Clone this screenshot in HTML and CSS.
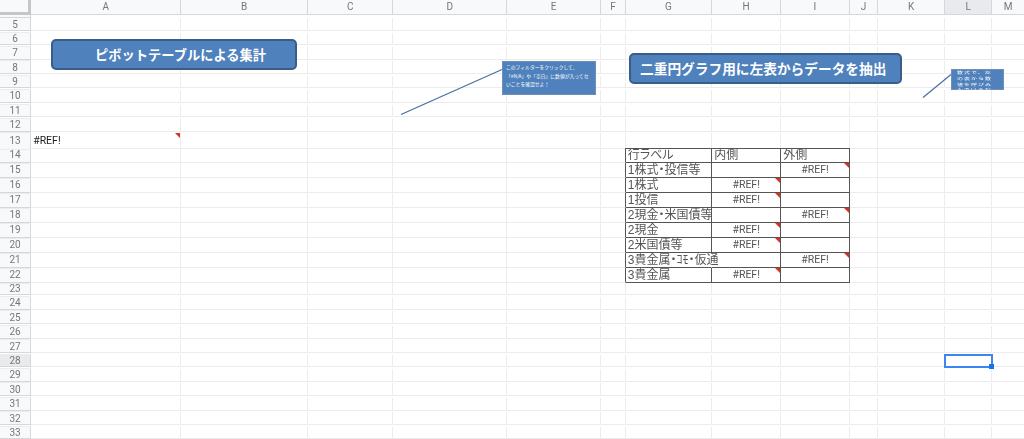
FILE: index.html
```html
<!DOCTYPE html>
<html lang="ja">
<head>
<meta charset="utf-8">
<title>ピボットテーブルによる集計</title>
<link rel="stylesheet" href="styles.css">
</head>
<body>
<main class="sheet">
  <div class="cols">
    <div class="corner"></div><b>A</b><b>B</b><b>C</b><b>D</b><b>E</b><b>F</b><b>G</b><b>H</b><b>I</b><b>J</b><b>K</b><b class="on">L</b><b>M</b><b></b>
  </div>
  <div class="row"><b>5</b><i></i><i></i><i></i><i></i><i></i><i></i><i></i><i></i><i></i><i></i><i></i><i></i><i></i><i></i></div>
  <div class="row"><b>6</b><i></i><i></i><i></i><i></i><i></i><i></i><i></i><i></i><i></i><i></i><i></i><i></i><i></i><i></i></div>
  <div class="row"><b>7</b><i></i><i></i><i></i><i></i><i></i><i></i><i></i><i></i><i></i><i></i><i></i><i></i><i></i><i></i></div>
  <div class="row"><b>8</b><i></i><i></i><i></i><i></i><i></i><i></i><i></i><i></i><i></i><i></i><i></i><i></i><i></i><i></i></div>
  <div class="row"><b>9</b><i></i><i></i><i></i><i></i><i></i><i></i><i></i><i></i><i></i><i></i><i></i><i></i><i></i><i></i></div>
  <div class="row"><b>10</b><i></i><i></i><i></i><i></i><i></i><i></i><i></i><i></i><i></i><i></i><i></i><i></i><i></i><i></i></div>
  <div class="row"><b>11</b><i></i><i></i><i></i><i></i><i></i><i></i><i></i><i></i><i></i><i></i><i></i><i></i><i></i><i></i></div>
  <div class="row"><b>12</b><i></i><i></i><i></i><i></i><i></i><i></i><i></i><i></i><i></i><i></i><i></i><i></i><i></i><i></i></div>
  <div class="row"><b>13</b><i class="ref note">#REF!</i><i></i><i></i><i></i><i></i><i></i><i class="tb"></i><i class="tb"></i><i class="tb"></i><i></i><i></i><i></i><i></i><i></i></div>
  <div class="row tr"><b>14</b><i></i><i></i><i></i><i></i><i></i><i class="tl"></i><i class="t">行ラベル</i><i class="t">内側</i><i class="t">外側</i><i></i><i></i><i></i><i></i><i></i></div>
  <div class="row tr"><b>15</b><i></i><i></i><i></i><i></i><i></i><i class="tl"></i><i class="t">1株式・投信等</i><i class="t"></i><i class="t v note">#REF!</i><i></i><i></i><i></i><i></i><i></i></div>
  <div class="row tr"><b>16</b><i></i><i></i><i></i><i></i><i></i><i class="tl"></i><i class="t">1株式</i><i class="t v note">#REF!</i><i class="t"></i><i></i><i></i><i></i><i></i><i></i></div>
  <div class="row tr"><b>17</b><i></i><i></i><i></i><i></i><i></i><i class="tl"></i><i class="t">1投信</i><i class="t v note">#REF!</i><i class="t"></i><i></i><i></i><i></i><i></i><i></i></div>
  <div class="row tr"><b>18</b><i></i><i></i><i></i><i></i><i></i><i class="tl"></i><i class="t">2現金・米国債等</i><i class="t"></i><i class="t v note">#REF!</i><i></i><i></i><i></i><i></i><i></i></div>
  <div class="row tr"><b>19</b><i></i><i></i><i></i><i></i><i></i><i class="tl"></i><i class="t">2現金</i><i class="t v note">#REF!</i><i class="t"></i><i></i><i></i><i></i><i></i><i></i></div>
  <div class="row tr"><b>20</b><i></i><i></i><i></i><i></i><i></i><i class="tl"></i><i class="t">2米国債等</i><i class="t v note">#REF!</i><i class="t"></i><i></i><i></i><i></i><i></i><i></i></div>
  <div class="row tr"><b>21</b><i></i><i></i><i></i><i></i><i></i><i class="tl"></i><i class="t open">3貴金属・ｺﾓ・仮通</i><i class="t"></i><i class="t v note">#REF!</i><i></i><i></i><i></i><i></i><i></i></div>
  <div class="row tr"><b>22</b><i></i><i></i><i></i><i></i><i></i><i class="tl"></i><i class="t">3貴金属</i><i class="t v note">#REF!</i><i class="t"></i><i></i><i></i><i></i><i></i><i></i></div>
  <div class="row"><b>23</b><i></i><i></i><i></i><i></i><i></i><i></i><i></i><i></i><i></i><i></i><i></i><i></i><i></i><i></i></div>
  <div class="row"><b>24</b><i></i><i></i><i></i><i></i><i></i><i></i><i></i><i></i><i></i><i></i><i></i><i></i><i></i><i></i></div>
  <div class="row"><b>25</b><i></i><i></i><i></i><i></i><i></i><i></i><i></i><i></i><i></i><i></i><i></i><i></i><i></i><i></i></div>
  <div class="row"><b>26</b><i></i><i></i><i></i><i></i><i></i><i></i><i></i><i></i><i></i><i></i><i></i><i></i><i></i><i></i></div>
  <div class="row"><b>27</b><i></i><i></i><i></i><i></i><i></i><i></i><i></i><i></i><i></i><i></i><i></i><i></i><i></i><i></i></div>
  <div class="row"><b class="on">28</b><i></i><i></i><i></i><i></i><i></i><i></i><i></i><i></i><i></i><i></i><i></i><i class="sel"></i><i></i><i></i></div>
  <div class="row"><b>29</b><i></i><i></i><i></i><i></i><i></i><i></i><i></i><i></i><i></i><i></i><i></i><i></i><i></i><i></i></div>
  <div class="row"><b>30</b><i></i><i></i><i></i><i></i><i></i><i></i><i></i><i></i><i></i><i></i><i></i><i></i><i></i><i></i></div>
  <div class="row"><b>31</b><i></i><i></i><i></i><i></i><i></i><i></i><i></i><i></i><i></i><i></i><i></i><i></i><i></i><i></i></div>
  <div class="row"><b>32</b><i></i><i></i><i></i><i></i><i></i><i></i><i></i><i></i><i></i><i></i><i></i><i></i><i></i><i></i></div>
  <div class="row"><b>33</b><i></i><i></i><i></i><i></i><i></i><i></i><i></i><i></i><i></i><i></i><i></i><i></i><i></i><i></i></div>

  <svg class="lines" viewBox="0 0 1024 439" aria-hidden="true">
    <line x1="401" y1="114.5" x2="502" y2="69.5"/>
    <line x1="923" y1="97.5" x2="951" y2="74.5"/>
  </svg>
  <div class="shape title one">ピボットテーブルによる集計</div>
  <div class="shape title two">二重円グラフ用に左表からデータを抽出</div>
  <div class="shape call one">このフィルターをクリックして、<br>「#N/A」や「空白」に数値が入ってな<br>いことを確認せよ！</div>
  <div class="shape call two"><p>数式で、左<br>の表から数<br>値を呼びみ<br>んでいるだ</p></div>
</main>
</body>
</html>
```
FILE: styles.css
```css
* { box-sizing: border-box; }
html, body { margin: 0; height: 100%; overflow: hidden; background: #fff; }
.sheet {
  position: relative;
  width: 1024px;
  height: 439px;
  overflow: hidden;
  font-family: Roboto, "Noto Sans CJK JP", sans-serif;
  --tracks: 31.2px 150px 127px 85px 114px 94px 24.6px 86.4px 69px 68.6px 28.4px 67px 47px 33px;
  filter: blur(0.35px);
}
.cols, .row { display: grid; grid-template-columns: var(--tracks); }
.cols { height: 18.2px; }
.row { height: 14.4px; }
.row.tr { height: 15px; }
b {
  display: flex;
  align-items: center;
  justify-content: center;
  font-weight: 400;
  font-size: 10px;
  color: #777;
  background: #f8f9fa;
  border-right: 1px solid #d6d7d9;
  border-bottom: 1px solid #d6d7d9;
}
b.on { background: #e8eaed; }
.corner {
  background: #f8f9fa;
  border-right: 3px solid #c4c7c5;
  border-bottom: 3px solid #c4c7c5;
}
i {
  display: block;
  position: relative;
  font-style: normal;
  white-space: nowrap;
  font-size: 12px;
  line-height: 14px;
  padding-left: 1px;
  color: #333;
  border-right: 1px solid #ececec;
  border-bottom: 1px solid #ececec;
}
.ref { font-size: 10.5px; line-height: 15px; color: #222; padding-left: 2px; }
.t {
  border-right-color: #555;
  border-bottom-color: #555;
  font-family: "Liberation Sans", "Noto Sans CJK JP", sans-serif;
  font-feature-settings: "palt";
  padding-left: 2px;
  color: #555;
}
.t.open { border-right-color: transparent; }
.tl { border-right-color: #555; }
.tb { border-bottom-color: #555; }
.v {
  font-family: Roboto, sans-serif;
  font-size: 10.5px;
  text-align: center;
  padding-left: 0;
  color: #555;
}
.note::after {
  content: "";
  position: absolute;
  top: 0;
  right: 0;
  border-top: 5px solid #d93025;
  border-left: 5px solid transparent;
}
.sel {
  outline: 2px solid #3b86f0;
  outline-offset: -1px;
  z-index: 2;
}
.sel::after {
  content: "";
  position: absolute;
  right: -3px;
  bottom: -3px;
  width: 5px;
  height: 5px;
  background: #1a73e8;
}
.lines {
  position: absolute;
  inset: 0;
  width: 1024px;
  height: 439px;
}
.lines line { stroke: #4a6f9f; stroke-width: 1.2; }
.shape {
  position: absolute;
  background: #4f81bd;
  color: #fff;
  font-family: "Noto Sans CJK JP", sans-serif;
}
.title {
  display: flex;
  align-items: center;
  height: 31px;
  border: 2px solid #385d8a;
  border-radius: 5px;
  font-weight: 700;
  white-space: nowrap;
}
.title.one { left: 51px; top: 38.5px; width: 246px; padding-left: 42px; font-size: 13.25px; }
.title.two { left: 629px; top: 52.5px; width: 273px; padding-left: 9px; font-size: 13.7px; }
.call { border: 1px solid #6f8fb8; white-space: nowrap; }
.call.one {
  left: 501.5px;
  top: 60.5px;
  width: 94.5px;
  height: 34px;
  padding: 1.7px 0 0 3.5px;
  font-size: 4.8px;
  line-height: 8.6px;
}
.call.two {
  left: 951px;
  top: 68.5px;
  width: 52.5px;
  height: 21px;
  padding: 0.5px 0 0 5px;
}
.call.two p {
  margin: 0;
  font-size: 6px;
  line-height: 9px;
  letter-spacing: 1px;
  transform: scaleY(0.62);
  transform-origin: 0 0;
}
```
